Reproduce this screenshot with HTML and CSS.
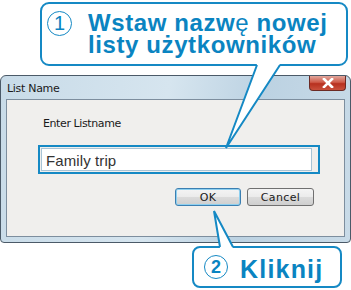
FILE: index.html
```html
<!DOCTYPE html>
<html lang="pl">
<head>
  <meta charset="UTF-8"/>
  <title>List Name</title>
  <link rel="stylesheet" href="styles.css">
</head>
<body>
  <div class="stage">
    <!-- dialog window -->
    <div class="dialog">
      <div class="titlebar">
        <span class="title">List Name</span>
        <span class="close">
          <svg width="14" height="10" viewBox="0 0 14 10"><path d="M3 1 L11 9 M11 1 L3 9" stroke="#fff" stroke-width="2.6" stroke-linecap="square"/></svg>
        </span>
      </div>
      <div class="content">
        <div class="label">Enter Listname</div>
        <div class="field-mark">
          <div class="field">Family trip</div>
        </div>
        <div class="buttons">
          <span class="btn default">OK</span>
          <span class="btn">Cancel</span>
        </div>
      </div>
    </div>

    <!-- annotations -->
    <div class="callout top">
      <span class="num">1</span>
      <span class="say">Wstaw nazw<span class="odd">ę</span> nowej<br>listy użytkowników</span>
    </div>
    <div class="callout bottom">
      <span class="num">2</span>
      <span class="say">Kliknij</span>
    </div>
    <svg class="tails" width="351" height="290" viewBox="0 0 351 290">
      <polygon points="257,64 280,64 226,148" fill="#fff"/>
      <path d="M257 65 L226 148 L280 65" fill="none" stroke="#1589c4" stroke-width="2"/>
      <polygon points="220,248 233,248 214,211" fill="#fff"/>
      <path d="M220 247 L214 211 L233 247" fill="none" stroke="#1589c4" stroke-width="2"/>
    </svg>
  </div>
</body>
</html>
```

FILE: styles.css
```css
html, body {
  margin: 0; padding: 0;
  background: #fff;
}

.stage {
  position: relative;
  width: 351px;
  height: 290px;
  padding-top: 75px;
  box-sizing: border-box;
  overflow: hidden;
}

/* window frame */
.dialog {
  width: 351px;
  height: 168px;
  box-sizing: border-box;
  border: 1px solid #4b5a68;
  border-radius: 6px 6px 4px 4px;
  background: linear-gradient(100deg, #c8dbe8 0%, #d6e5ef 45%, #bcd2e2 70%, #c9dbe8 100%);
  display: flex;
  flex-direction: column;
  padding: 0 5px 5px;
}

.titlebar {
  height: 23px;
  display: flex;
  align-items: flex-start;
  justify-content: space-between;
}
.title {
  font: 11px "DejaVu Sans", sans-serif;
  color: #1a1a1a;
  margin: 6px 0 0 1px;
  letter-spacing: -0.3px;
}
.close {
  width: 37px; height: 15px;
  margin-right: -1px;
  border: 1px solid #6b2a24;
  border-top: none;
  border-radius: 0 0 4px 4px;
  background: linear-gradient(#e0a79d 0%, #cf5a48 45%, #b7301f 55%, #c9503c 100%);
  display: flex;
  align-items: center;
  justify-content: center;
  box-sizing: border-box;
}

.content {
  flex: 1;
  border: 1px solid #7d8e9e;
  background: #f0efed;
  padding: 17px 0 0 36px;
  display: flex;
  flex-direction: column;
}

.label {
  font: 11px "DejaVu Sans", sans-serif;
  letter-spacing: -0.4px;
  color: #1a1a1a;
}

.field-mark {
  margin: 15px 0 0 -5px;
  width: 282px;
  height: 29px;
  box-sizing: border-box;
  border: 2px solid #1589c4;
  padding: 1px 6px 1px 1px;
}
.field {
  height: 100%;
  box-sizing: border-box;
  border: 1px solid #a8c4d6;
  background: #fff;
  font: 15px "Liberation Sans", Arial, sans-serif;
  color: #333;
  padding: 3px 0 0 4px;
  letter-spacing: 0.1px;
}

.buttons {
  display: flex;
  gap: 6px;
  margin: 14px 0 0 132px;
}
.btn {
  width: 67px;
  height: 18px;
  box-sizing: border-box;
  border: 1px solid #707070;
  border-radius: 3px;
  background: linear-gradient(#f4f4f4 0%, #ebebeb 50%, #dbdbdb 51%, #cfcfcf 100%);
  font: 11px "DejaVu Sans", sans-serif;
  color: #1a1a1a;
  display: flex;
  align-items: center;
  justify-content: center;
  letter-spacing: 0.4px;
}
.btn.default {
  width: 66px;
  border-color: #3c7fb1;
  box-shadow: inset 0 0 0 1px #8ed0f0;
}

/* annotation callouts */
.callout {
  position: absolute;
  box-sizing: border-box;
  border: 2px solid #1589c4;
  border-radius: 9px;
  background: #fff;
  display: flex;
  align-items: flex-start;
  color: #0a84c1;
}
.callout.top {
  left: 40px; top: 2px;
  width: 308px; height: 64px;
  padding: 5px 0 0 5px;
}
.callout.bottom {
  left: 192px; top: 246px;
  width: 150px; height: 42px;
  padding: 7px 0 0 10px;
  border-radius: 8px;
}

.num {
  width: 25px; height: 25px;
  flex: none;
  box-sizing: border-box;
  border: 1.5px solid #1589c4;
  border-radius: 50%;
  display: flex;
  align-items: center;
  justify-content: center;
  font: 20px "Liberation Sans", sans-serif;
  color: #0a84c1;
}
.top .num { margin: 2px 0 0 0; }
.bottom .num { font-weight: bold; font-size: 18px; width: 24px; height: 24px; }

.say {
  font: bold 24px/22px "Liberation Sans", Arial, sans-serif;
  letter-spacing: 0.6px;
}
.top .say { margin: 3px 0 0 16px; }
.bottom .say { margin: 2px 0 0 12px; font-size: 25px; line-height: 25px; letter-spacing: 1.2px; }
.say .odd { font-weight: normal; }

.tails {
  position: absolute;
  left: 0; top: 0;
  pointer-events: none;
}
```
